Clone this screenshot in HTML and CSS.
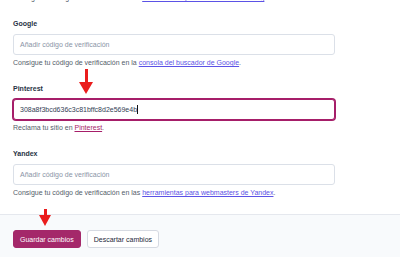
FILE: index.html
```html
<!DOCTYPE html>
<html lang="es">
<head>
    <meta charset="UTF-8">
    <meta name="viewport" content="width=device-width, initial-scale=1.0">
    <title>Conexiones del sitio</title>
    <link rel="stylesheet" href="styles.css">
</head>
<body>
    <main class="settings">
        <p class="help help-cut">Consigue tu código de verificación en las <a href="#">herramientas para webmasters de Bing</a>.</p>

        <div class="field">
            <label class="field-label">Google</label>
            <div class="input"><span class="placeholder">Añadir código de verificación</span></div>
            <p class="help">Consigue tu código de verificación en la <a href="#">consola del buscador de Google</a>.</p>
        </div>

        <div class="field">
            <label class="field-label">Pinterest</label>
            <div class="input input-focus"><span class="value">308a8f3bcd636c3c81bffc8d2e569e4b</span><span class="caret"></span></div>
            <p class="help">Reclama tu sitio en <a href="#" class="link-active">Pinterest</a>.</p>
        </div>

        <div class="field">
            <label class="field-label">Yandex</label>
            <div class="input"><span class="placeholder">Añadir código de verificación</span></div>
            <p class="help">Consigue tu código de verificación en las <a href="#">herramientas para webmasters de Yandex</a>.</p>
        </div>
    </main>

    <footer class="actions">
        <button class="btn btn-primary">Guardar cambios</button>
        <button class="btn btn-secondary">Descartar cambios</button>
    </footer>

    <!-- annotation arrows -->
    <div class="arrow arrow-field"></div>
    <div class="arrow arrow-save"></div>
</body>
</html>
```

FILE: styles.css
```css
* {
    margin: 0;
    padding: 0;
    box-sizing: border-box;
}

body {
    font-family: "Liberation Sans", Arial, sans-serif;
    font-size: 7px;
    color: #1e293b;
    background: #fff;
    position: relative;
    overflow: hidden;
}

.settings {
    padding: 0 13px 16px;
}

.field {
    margin-top: 16px;
    max-width: 322px;
}

.field-label {
    display: block;
    font-weight: 700;
    line-height: 10px;
    margin-bottom: 5px;
    color: #273244;
}

.input {
    height: 21px;
    border: 1px solid #dbe0e8;
    border-radius: 3px;
    padding: 0 6px;
    display: flex;
    align-items: center;
    background: #fff;
}

.input-focus {
    border-color: #a61e69;
    box-shadow: 0 0 0 1px #a61e69;
}

.placeholder {
    color: #8a94a6;
}

.value {
    color: #334155;
}

.caret {
    display: inline-block;
    width: 1px;
    height: 9px;
    background: #111;
}

.help {
    margin-top: 3px;
    line-height: 10px;
    color: #535c69;
}

.help-cut {
    margin-top: -7px;
}

.help a {
    color: #5b52e6;
    text-decoration: underline;
}

.help a.link-active {
    color: #a61e69;
}

.actions {
    border-top: 1px solid #e5e8ee;
    background: #f8fafc;
    padding: 15px 13px 20px;
    display: flex;
    gap: 6px;
}

.btn {
    font-family: inherit;
    font-size: 7px;
    font-weight: 400;
    height: 18px;
    padding: 0 6px;
    border-radius: 3px;
    cursor: pointer;
}

.btn-primary {
    background: #a4286a;
    color: #fff;
    border: 1px solid #a4286a;
}

.btn-secondary {
    background: #fff;
    color: #1e293b;
    border: 1px solid #d6dae2;
}

.arrow {
    position: absolute;
    width: 14px;
}

.arrow::before {
    content: "";
    display: block;
    width: 3px;
    margin: 0 auto;
    background: #ea1c1c;
}

.arrow::after {
    content: "";
    display: block;
    width: 0;
    height: 0;
    border-left: 7px solid transparent;
    border-right: 7px solid transparent;
    border-top: 12px solid #ea1c1c;
}

.arrow-field {
    left: 79px;
    top: 69px;
}

.arrow-field::before {
    height: 13px;
}

.arrow-save {
    left: 39px;
    top: 209px;
    width: 12px;
}

.arrow-save::before {
    height: 6px;
}

.arrow-save::after {
    border-left-width: 6px;
    border-right-width: 6px;
    border-top-width: 11px;
}
```
